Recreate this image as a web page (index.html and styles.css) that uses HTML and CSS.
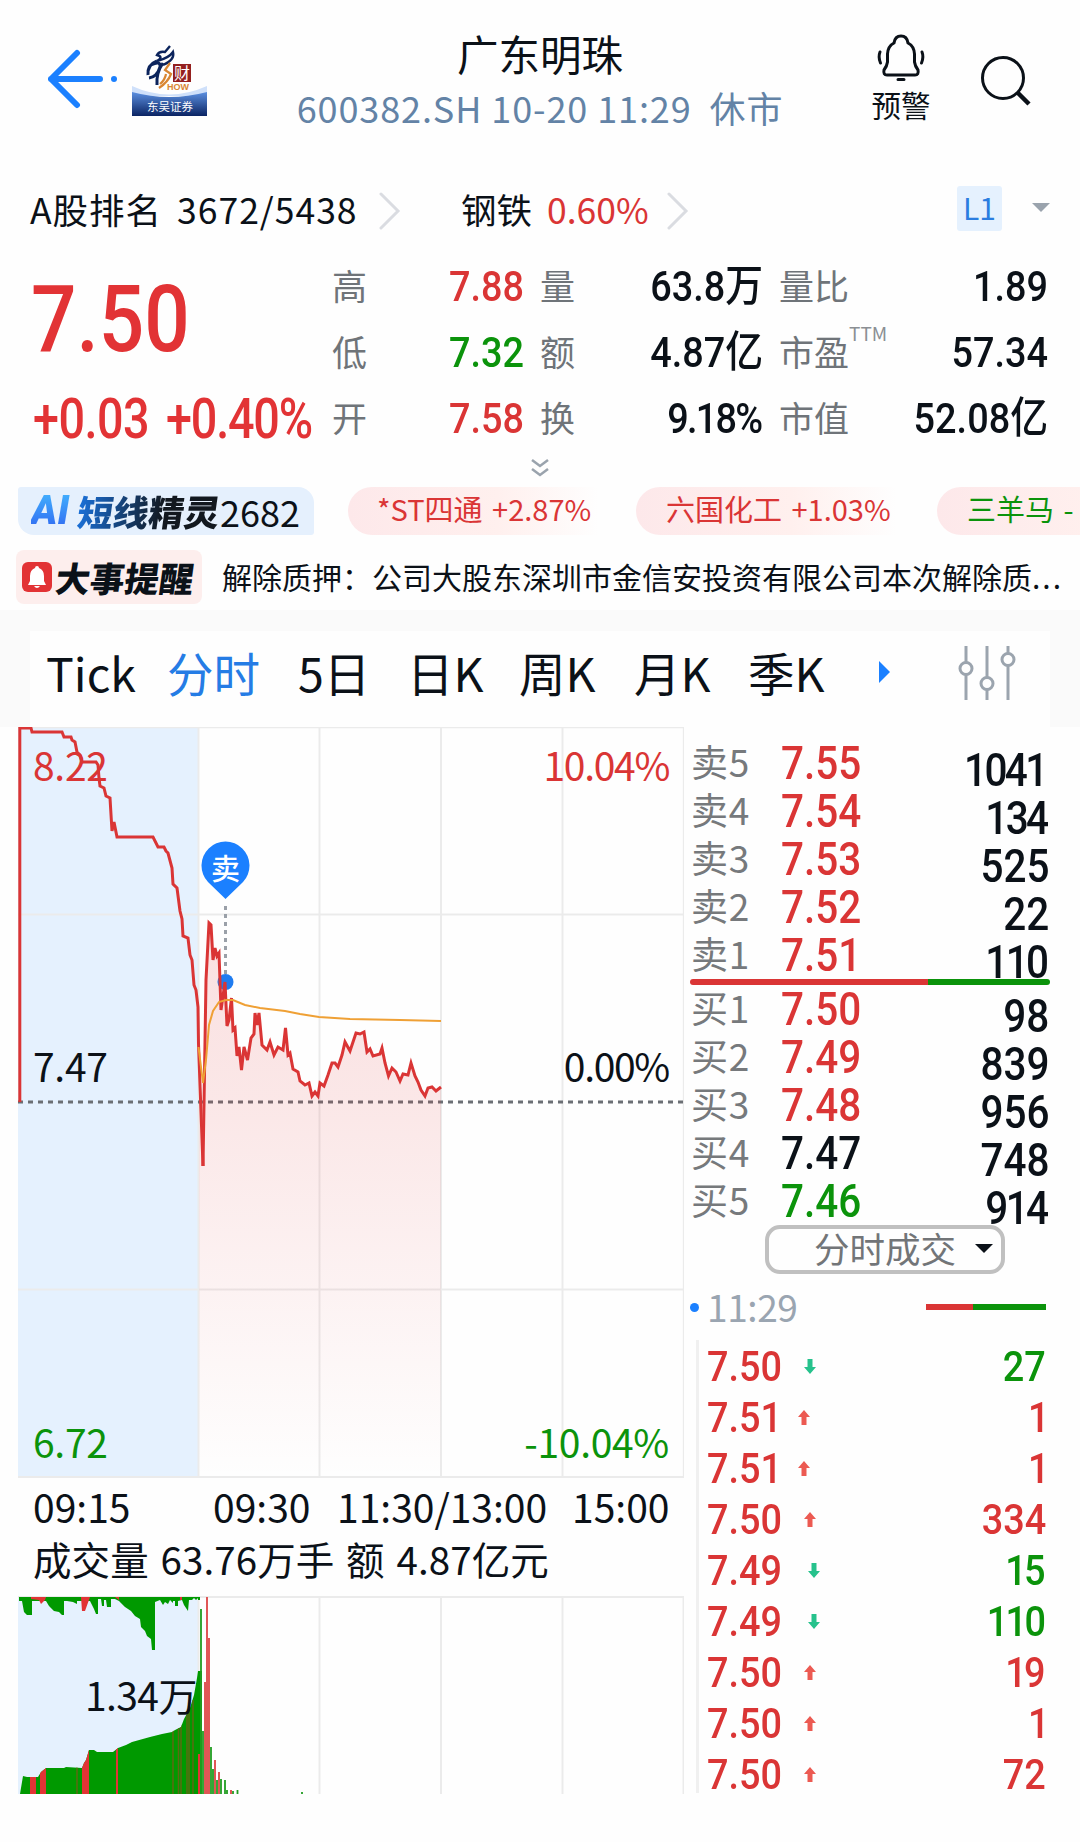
FILE: index.html
```html
<!DOCTYPE html>
<html lang="zh-CN">
<head>
    <meta charset="UTF-8">
    <meta name="viewport" content="width=device-width, initial-scale=1.0">
    <title>广东明珠 600382.SH</title>
    <link rel="stylesheet" href="styles.css">
</head>
<body>
    <!-- 顶部导航 -->
    <header class="header">
        <div class="header-left">
            <svg class="back" width="70" height="62" viewBox="0 0 70 62" fill="none" stroke="#1b80ff" stroke-width="6" stroke-linecap="round" stroke-linejoin="round">
                <path d="M29 5 L3 31 L29 57 M3 31 H52"/>
                <circle cx="66" cy="31" r="3" fill="#1b80ff" stroke="none"/>
            </svg>
            <div class="broker">
                <svg width="75" height="73" viewBox="0 0 75 73">
                    <defs>
                        <linearGradient id="brokerBg" x1="0" y1="0" x2="0" y2="1">
                            <stop offset="0" stop-color="#5b8fe0"/>
                            <stop offset="1" stop-color="#0b2463"/>
                        </linearGradient>
                    </defs>
                    <path d="M0 43 Q37 60 75 43 V53 H0Z" fill="#cfe0fa"/>
                    <path d="M0 49 Q37 59 75 49 V73 H0Z" fill="url(#brokerBg)"/>
                    <path d="M38 3 L33 9 Q27 8 25 12 Q32 14 25 18 Q37 15 41 9 Q43 17 31 22" fill="none" stroke="#0c245c" stroke-width="2.4"/>
                    <path d="M25 18 Q15 22 16 32 M19 22 Q29 17 28 24 Q25 34 17 35 M31 20 Q24 30 25 42" fill="none" stroke="#0c245c" stroke-width="3"/>
                    <path d="M38 20 L33 27 L39 31 Q36 39 27 45 M34 31 Q33 37 28 41" fill="none" stroke="#d98632" stroke-width="2.2"/>
                    <rect x="41" y="21" width="18" height="18" fill="#94201f"/>
                    <text class="logo-cai" x="42" y="36">财</text>
                    <text class="logo-how" x="35" y="47">HOW</text>
                    <text class="logo-name" x="15" y="68">东吴证券</text>
                </svg>
            </div>
        </div>
        <div class="header-title">
            <h1>广东明珠</h1>
            <p>600382.SH 10-20 11:29  休市</p>
        </div>
        <div class="header-right">
            <div class="alarm">
                <svg width="50" height="48" viewBox="0 0 50 48" fill="none" stroke="#0b1118" stroke-width="3" stroke-linecap="round" stroke-linejoin="round">
                    <path d="M18 9 Q19 2 25 2 Q31 2 32 9 Q38 12 38.500 20 V28 Q39 32 42 36 Q43 41 39 41 H11 Q7 41 8 36 Q11 32 11.500 28 V20 Q12 12 18 9Z"/>
                    <path d="M22 45.500 H28 M4 18 Q2 23 4.500 29 M46 18 Q48 23 45.500 29"/>
                </svg>
                <span>预警</span>
            </div>
            <svg class="search" width="54" height="54" viewBox="0 0 54 54" fill="none" stroke="#0b1118" stroke-width="3">
                <circle cx="24" cy="24" r="20.500"/>
                <path d="M39 39 L50 50" stroke-width="4.500"/>
            </svg>
        </div>
    </header>

    <!-- 排名 / 行业 -->
    <div class="rank">
        <span class="rank-all">A股排名 3672/5438</span>
        <svg class="arrow" width="22" height="38" viewBox="0 0 22 38"><path d="M2 2 L19 19 L2 36"/></svg>
        <span class="rank-sector">钢铁 <b class="red">0.60%</b></span>
        <svg class="arrow" width="22" height="38" viewBox="0 0 22 38"><path d="M2 2 L19 19 L2 36"/></svg>
        <span class="level">L1</span>
        <span class="caret"></span>
    </div>

    <!-- 行情数据 -->
    <section class="quote">
        <div class="price">
            <div class="price-now"><span class="num">7.50</span></div>
            <div class="price-change"><span class="num">+0.03</span><span class="num">+0.40%</span></div>
        </div>
        <div class="stats">
            <span class="label">高</span><span class="value red">7.88</span>
            <span class="label">量</span><span class="value">63.8万</span>
            <span class="label">量比</span><span class="value">1.89</span>
            <span class="label">低</span><span class="value green">7.32</span>
            <span class="label">额</span><span class="value">4.87亿</span>
            <span class="label">市盈<sup>TTM</sup></span><span class="value">57.34</span>
            <span class="label">开</span><span class="value red">7.58</span>
            <span class="label">换</span><span class="value percent">9.18%</span>
            <span class="label">市值</span><span class="value">52.08亿</span>
        </div>
    </section>
    <div class="more">
        <svg width="18" height="20" viewBox="0 0 18 20" fill="none" stroke="#9aa3ad" stroke-width="2.500"><path d="M1 2 L9 8 L17 2 M1 11 L9 17 L17 11"/></svg>
    </div>

    <!-- 短线精灵 -->
    <div class="sprite">
        <div class="sprite-badge"><i class="ai">AI</i><i class="sprite-name">短线精灵</i><span>2682</span></div>
        <div class="pill pill-1 red">*ST四通 +2.87%</div>
        <div class="pill pill-2 red">六国化工 +1.03%</div>
        <div class="pill pill-3 green">三羊马 -</div>
    </div>

    <div class="notice">
        <div class="notice-badge">
            <svg width="30" height="30" viewBox="0 0 30 30">
                <rect width="30" height="30" rx="6" fill="#e23335"/>
                <path d="M15 4 Q17 4 17 6 Q22 8 22 14 V19 L24 23 H6 L8 19 V14 Q8 8 13 6 Q13 4 15 4Z M12 24 H18 Q15 28 12 24Z" fill="#fff"/>
            </svg>
            <i>大事提醒</i>
        </div>
        <p>解除质押：公司大股东深圳市金信安投资有限公司本次解除质<span>...</span></p>
    </div>

    <!-- 周期切换 -->
    <div class="tabs-wrap">
        <nav class="tabs">
            <a class="tab tick">Tick</a>
            <a class="tab active">分时</a>
            <a class="tab day5">5日</a>
            <a class="tab day">日K</a>
            <a class="tab week">周K</a>
            <a class="tab month">月K</a>
            <a class="tab season">季K</a>
            <span class="tabs-next"></span>
            <svg class="sliders" width="60" height="56" viewBox="0 0 60 56" fill="none" stroke="#9ba4ae" stroke-width="3">
                <path d="M9 1 V17 M9 30 V55 M30 1 V32 M30 45 V55 M51 1 V8 M51 21 V55"/>
                <circle cx="9" cy="23.500" r="6"/>
                <circle cx="30" cy="38.500" r="6"/>
                <circle cx="51" cy="14.500" r="6"/>
            </svg>
        </nav>
    </div>

    <main class="board">
        <div class="charts">
            <!-- 分时图 -->
            <div class="chart">
                <svg width="666" height="751" viewBox="18 727 666 751">
                    <defs>
                        <linearGradient id="area" gradientUnits="userSpaceOnUse" x1="0" y1="920" x2="0" y2="1477">
                            <stop offset="0" stop-color="#e23335" stop-opacity=".15"/>
                            <stop offset=".35" stop-color="#e23335" stop-opacity=".11"/>
                            <stop offset="1" stop-color="#e23335" stop-opacity="0"/>
                        </linearGradient>
                    </defs>
                    <rect x="18" y="727" width="180" height="750" fill="#e5f1fe"/>
                    <g fill="none" stroke="#ebebeb" stroke-width="2">
                        <path stroke-width="1.300" d="M18 727.500 H683.500 V1477"/>
                        <path d="M18 914.500 H683 M18 1289.500 H683 M18 1477 H684 M198.500 727 V1477 M319.500 727 V1477 M441 727 V1477 M562.500 727 V1477"/>
                    </g>
                    <path d="M18 1102 H683" stroke="#6b6f74" stroke-width="3" stroke-dasharray="5 5"/>
                    <path fill="url(#area)" d="M199 1050 L203 1166 L206 980 L209 923 L211 925 L213 960 L215 948 L217 956 L219 953 L221 1010 L225 982 L227 1026 L229 1020 L231.500 998 L233 1030 L235 1028 L237 1056 L239 1047 L241.500 1070 L244 1047 L247.500 1060 L251 1038 L254 1034 L255 1013 L257 1025 L259 1013 L262 1045 L267 1050 L270 1042 L274 1055 L278 1047 L283 1050 L285.500 1028 L288 1055 L290 1053 L293 1069 L298 1072 L300 1081 L305 1085 L309 1083 L312 1096 L315 1092 L318 1096 L320 1083 L324 1086 L328 1075 L332 1063 L335 1063 L338 1067 L342 1055 L345 1042 L350 1051 L356 1033 L360 1034 L364 1032 L367 1052 L370 1049 L373 1056 L380 1054 L382 1048 L385 1063 L388.500 1076 L392 1068 L396 1072 L400 1081 L403 1074 L408 1075 L411 1063 L415 1076 L418 1082 L421 1090 L425 1096 L428 1088 L432 1087 L436 1091 L441 1087 V1477 H199Z"/>
                    <path d="M225.500 906 V975" stroke="#9aa0a8" stroke-width="3" stroke-dasharray="4 4"/>
                    <circle cx="225.500" cy="982" r="8" fill="#1f7cf0"/>
                    <g fill="none" stroke="#da3535" stroke-width="3">
                        <path d="M19.800 1102 V728 H31 L32 732 H62 L64 737 H71 L72 740 L75 742 L77 752 L80 755 L82 762 H96 L98 765 L99 778 L100 786 L104 788 L106 796 L110 798 L112 831 L114 822 L117 837 H153 L158 847 H164 L166 851 L168 853 L172 868 L173 884 L177 888 L180 911 L182 919 L183 936 L188 938 L190 955 L192 960 L194 985 L196 990 L198 1007 L198.500 1044 L203 1166"/>
                        <path d="M203 1166 L206 980 L209 923 L211 925 L213 960 L215 948 L217 956 L219 953 L221 1010 L225 982 L227 1026 L229 1020 L231.500 998 L233 1030 L235 1028 L237 1056 L239 1047 L241.500 1070 L244 1047 L247.500 1060 L251 1038 L254 1034 L255 1013 L257 1025 L259 1013 L262 1045 L267 1050 L270 1042 L274 1055 L278 1047 L283 1050 L285.500 1028 L288 1055 L290 1053 L293 1069 L298 1072 L300 1081 L305 1085 L309 1083 L312 1096 L315 1092 L318 1096 L320 1083 L324 1086 L328 1075 L332 1063 L335 1063 L338 1067 L342 1055 L345 1042 L350 1051 L356 1033 L360 1034 L364 1032 L367 1052 L370 1049 L373 1056 L380 1054 L382 1048 L385 1063 L388.500 1076 L392 1068 L396 1072 L400 1081 L403 1074 L408 1075 L411 1063 L415 1076 L418 1082 L421 1090 L425 1096 L428 1088 L432 1087 L436 1091 L441 1087"/>
                    </g>
                    <path fill="none" stroke="#efa035" stroke-width="2" d="M198.500 1047 L203 1083 L206 1060 L209 1025 L213 1011 L219 1002 L226 1000 L233 1000 L245 1005 L260 1008 L285 1011 L300 1014 L319 1017 L350 1019 L400 1020 L441 1021"/>
                    <path fill="#1b80ff" d="M225.500 899 L208 882 A24 24 0 1 1 243 882 Z"/>
                    <text class="pin-text" x="225.500" y="880">卖</text>
                </svg>
                <span class="axis top-left red">8.22</span>
                <span class="axis top-right red">10.04%</span>
                <span class="axis mid-left">7.47</span>
                <span class="axis mid-right">0.00%</span>
                <span class="axis bottom-left green">6.72</span>
                <span class="axis bottom-right green">-10.04%</span>
            </div>
            <div class="times"><span>09:15</span><span>09:30</span><span>11:30/13:00</span><span>15:00</span></div>
            <div class="volume-title">成交量 63.76万手 额 4.87亿元</div>
            <!-- 成交量 -->
            <div class="volume">
                <svg width="666" height="198" viewBox="18 1596 666 198">
                    <defs>
                        <clipPath id="volShape">
                            <path d="M20 1794 L23 1776 L27 1777 H38 L41 1772 L46 1768 H64 L66 1767 L82 1768 L84 1763 L86 1760 L89 1750 H94 L97 1752 H113 L118 1748 L126 1745 L132 1742 L150 1737 L162 1734 L172 1732 L175 1730 L181 1727 L184 1719 L190 1708 L194 1695 L197 1678 L198 1671 H202 V1794Z"/>
                        </clipPath>
                    </defs>
                    <rect x="18" y="1596" width="180" height="198" fill="#e5f1fe"/>
                    <path fill="none" stroke="#ebebeb" stroke-width="2" d="M18 1597 H683.500 V1794 M198.500 1597 V1794 M319.500 1597 V1794 M441 1597 V1794 M562.500 1597 V1794"/>
                    <path fill="#009900" d="M19 1597 H200 V1600 H198 V1598 L196 1600 L194 1598 L192 1600 H189 L188 1611 L184 1605 L182 1600 L178 1601 V1606 H175 V1601 H173 V1603 L170 1600 L168 1604 L165 1602 L163 1605 L160 1600 L155 1602 V1650 H152 L151 1639 L147 1636 L145 1631 L141 1627 L140 1619 L135 1616 L131 1611 L125 1607 L119 1601 L115 1599 H111 V1607 H107 L106 1600 H104 V1606 H102 L101 1599 H98 V1614 H96 L94 1609 L90 1601 H77 V1604 L73 1602 L67 1601 L64 1601 V1615 H62 L59 1612 L54 1611 L49 1606 L46 1601 H32 V1615 H27 L24 1612 L22 1601 H19Z"/>
                    <path fill="#e23335" d="M31 1597 H46 L45 1600 L41 1604 L39 1600 L31 1599Z M81 1597 H90 L85 1611 H82Z M115 1597 H119 V1600Z M180 1597 H182 V1600 H180Z"/>
                    <g clip-path="url(#volShape)">
                        <rect x="18" y="1660" width="190" height="134" fill="#009900"/>
                        <path fill="#e23335" d="M30 1700 H36 V1794 H30Z M40 1700 H46 V1794 H40Z M82 1700 H89 V1794 H82Z M116 1700 H118 V1794 H116Z M198 1754 H200 V1794 H198Z"/>
                        <path stroke="#5c6a12" stroke-width="1.500" d="M77 1700 V1794 M173 1700 V1794 M178.500 1700 V1794 M181 1700 V1794 M187 1700 V1794 M189 1700 V1794 M193 1700 V1794"/>
                    </g>
                    <path stroke="#219d21" stroke-width="1.800" d="M201 1609 V1794 M203 1731 V1794 M211 1747 V1794 M213 1769 V1794 M217 1780 V1794 M221 1779 V1794 M225 1780 V1794 M227 1790 V1794 M233 1791 V1794 M237.500 1790 V1794 M302 1792 V1794"/>
                    <path stroke="#e05656" stroke-width="2" d="M205 1682 V1794 M207 1597 V1794 M209 1638 V1794 M215 1760 V1794 M219 1772 V1794 M231 1790 V1794"/>
                </svg>
                <span class="axis volume-max">1.34万</span>
            </div>
        </div>

        <!-- 五档盘口 -->
        <aside class="side">
            <div class="book">
                <div class="row"><span>卖5</span><b class="red">7.55</b><em class="tight">1041</em></div>
                <div class="row"><span>卖4</span><b class="red">7.54</b><em class="tight">134</em></div>
                <div class="row"><span>卖3</span><b class="red">7.53</b><em>525</em></div>
                <div class="row"><span>卖2</span><b class="red">7.52</b><em>22</em></div>
                <div class="row"><span>卖1</span><b class="red">7.51</b><em class="tight">110</em></div>
            </div>
            <div class="ratio"></div>
            <div class="book">
                <div class="row"><span>买1</span><b class="red">7.50</b><em>98</em></div>
                <div class="row"><span>买2</span><b class="red">7.49</b><em>839</em></div>
                <div class="row"><span>买3</span><b class="red">7.48</b><em>956</em></div>
                <div class="row"><span>买4</span><b>7.47</b><em>748</em></div>
                <div class="row"><span>买5</span><b class="green">7.46</b><em class="tight">914</em></div>
            </div>
            <button class="deal-type">分时成交<span class="caret-dark"></span></button>
            <div class="deal-time"><i></i><span>11:29</span><div class="deal-ratio"></div></div>
            <!-- 逐笔成交 -->
            <div class="deals">
                <div class="deal"><b>7.50</b><svg class="down" viewBox="0 0 12 16"><path d="M3.500 0 H8.500 V8 H12 L6 15 L0 8 H3.500Z"/></svg><em class="green">27</em></div>
                <div class="deal"><b class="narrow">7.51</b><svg class="up" viewBox="0 0 12 16"><path d="M3.500 15 H8.500 V7 H12 L6 0 L0 7 H3.500Z"/></svg><em class="red one">1</em></div>
                <div class="deal"><b class="narrow">7.51</b><svg class="up" viewBox="0 0 12 16"><path d="M3.500 15 H8.500 V7 H12 L6 0 L0 7 H3.500Z"/></svg><em class="red one">1</em></div>
                <div class="deal"><b>7.50</b><svg class="up" viewBox="0 0 12 16"><path d="M3.500 15 H8.500 V7 H12 L6 0 L0 7 H3.500Z"/></svg><em class="red">334</em></div>
                <div class="deal"><b class="wide">7.49</b><svg class="down" viewBox="0 0 12 16"><path d="M3.500 0 H8.500 V8 H12 L6 15 L0 8 H3.500Z"/></svg><em class="green tight">15</em></div>
                <div class="deal"><b class="wide">7.49</b><svg class="down" viewBox="0 0 12 16"><path d="M3.500 0 H8.500 V8 H12 L6 15 L0 8 H3.500Z"/></svg><em class="green tight">110</em></div>
                <div class="deal"><b>7.50</b><svg class="up" viewBox="0 0 12 16"><path d="M3.500 15 H8.500 V7 H12 L6 0 L0 7 H3.500Z"/></svg><em class="red tight">19</em></div>
                <div class="deal"><b>7.50</b><svg class="up" viewBox="0 0 12 16"><path d="M3.500 15 H8.500 V7 H12 L6 0 L0 7 H3.500Z"/></svg><em class="red one">1</em></div>
                <div class="deal"><b>7.50</b><svg class="up" viewBox="0 0 12 16"><path d="M3.500 15 H8.500 V7 H12 L6 0 L0 7 H3.500Z"/></svg><em class="red">72</em></div>
            </div>
        </aside>
    </main>
</body>
</html>
```
FILE: styles.css
```css
* {
    box-sizing: border-box;
}

body {
    margin: 0;
    width: 1080px;
    height: 1842px;
    overflow: hidden;
    background: #fefefe;
    color: #0b1118;
    font-family: "Noto Sans CJK SC", "Noto Sans", sans-serif;
    font-weight: 400;
}

svg {
    display: block;
    flex: none;
}

i, em {
    font-style: normal;
}

.red {
    color: #da3535;
}

.green {
    color: #0b930b;
}

/* 顶部导航 */
.header {
    height: 180px;
    display: flex;
    justify-content: space-between;
}

.header-left {
    width: 280px;
    display: flex;
    padding: 43px 0 0 48px;
}

.back {
    margin-top: 5px;
}

.broker {
    margin-left: 14px;
}

.logo-cai {
    font-size: 16px;
    fill: #fff;
}

.logo-how {
    font: bold 9px "Liberation Sans", sans-serif;
    fill: #d98632;
}

.logo-name {
    font-size: 11.5px;
    fill: #fff;
}

.header-title {
    width: 520px;
    text-align: center;
    padding-top: 28px;
}

.header-title h1 {
    margin: 0;
    font-size: 41.5px;
    line-height: 50px;
    font-weight: 400;
}

.header-title p {
    margin: 4px 0 0;
    font-size: 36px;
    line-height: 50px;
    color: #6383a6;
    white-space: pre;
    letter-spacing: 0.9px;
}

.header-right {
    width: 280px;
    display: flex;
    padding-top: 34px;
    padding-left: 71px;
}

.alarm {
    width: 60px;
    display: flex;
    flex-direction: column;
    align-items: center;
    font-size: 29.5px;
    line-height: 40px;
    white-space: nowrap;
}

.alarm span {
    margin-top: 2px;
}

.search {
    margin: 20px 0 0 48px;
}

/* 排名 */
.rank {
    height: 58px;
    padding-left: 30px;
    display: flex;
    align-items: center;
    font-size: 35.5px;
    line-height: 50px;
    white-space: pre;
}

.rank b {
    font-weight: 400;
}

.rank-all {
    width: 349px;
    letter-spacing: 1px;
    word-spacing: 6px;
}

.rank-sector {
    width: 206px;
    margin-left: 60px;
    word-spacing: 7px;
}

.arrow {
    margin-top: 3px;
    fill: none;
    stroke: #dadce1;
    stroke-width: 3;
    stroke-linecap: round;
}

.level {
    width: 45px;
    height: 45px;
    margin: -2px 0 0 268px;
    border-radius: 3px;
    background: #e5f1fe;
    color: #2b7de0;
    font-size: 30px;
    line-height: 42px;
    text-align: center;
}

.caret {
    margin: -3px 0 0 30px;
    border: 9px solid transparent;
    border-top-color: #9aa3ad;
    border-bottom: 0;
}

/* 行情 */
.quote {
    display: flex;
    height: 197px;
    margin-top: 15px;
    font-family: Roboto, "Noto Sans CJK SC", sans-serif;
}

.price {
    width: 330px;
    padding: 17px 0 0 31px;
    font-weight: 500;
    color: #e23335;
}

.num {
    display: inline-block;
    transform: scaleX(0.86);
    transform-origin: left;
}

.price-now {
    font-size: 93px;
    line-height: 100px;
}

.price-change {
    display: flex;
    padding-left: 2px;
    font-size: 55px;
    line-height: 99px;
    letter-spacing: -1.4px;
}

.price-change .num {
    width: 133px;
    transform: scaleX(0.85);
}

.price-change .num:first-child {
    letter-spacing: -0.6px;
}

.stats {
    width: 720px;
    display: grid;
    grid-template-columns: 50px 144px 67px 172px 128px 157px;
    grid-template-rows: repeat(3, 66px);
    line-height: 66px;
}

.label {
    padding-left: 16px;
    font-family: "Noto Sans CJK SC", sans-serif;
    font-size: 35px;
    line-height: 64px;
    color: #6f7479;
    white-space: nowrap;
}

.stats .label:nth-child(6n+1) {
    padding-left: 2px;
}

.label sup {
    display: inline-block;
    font-size: 19px;
    line-height: 20px;
    vertical-align: 25px;
    color: #8b8f94;
}

.value {
    text-align: right;
    font-size: 43px;
    font-weight: 500;
    white-space: nowrap;
    transform: scaleX(0.88);
    transform-origin: right;
}

.percent {
    padding-right: 2px;
    letter-spacing: -2px;
}

.tight {
    letter-spacing: -3px;
}

.more {
    height: 37px;
    display: flex;
    justify-content: center;
    padding-top: 8px;
}

/* 短线精灵 */
.sprite {
    display: flex;
    height: 48px;
    padding-left: 18px;
    white-space: nowrap;
}

.sprite-badge {
    flex: none;
    width: 296px;
    display: flex;
    align-items: center;
    padding-left: 13px;
    border-radius: 3px 16px 3px 16px;
    background: #e5f0fd;
    font-size: 36px;
    line-height: 44px;
}

.ai {
    width: 47px;
    font: italic 900 40px/44px Roboto, sans-serif;
    background: linear-gradient(#43b7ff, #2f63f0);
    -webkit-background-clip: text;
    background-clip: text;
    color: transparent;
}

.sprite-name {
    width: 142px;
    font-size: 35.5px;
    font-weight: 900;
    transform: skewX(-8deg);
    background: linear-gradient(90deg, #1a70d8, #12181f 60%);
    -webkit-background-clip: text;
    background-clip: text;
    color: transparent;
}

.pill {
    flex: none;
    height: 48px;
    border-radius: 24px 0 0 24px;
    background: linear-gradient(90deg, #fde8ea, #fff0ee 60%, #fefefe);
    font-size: 29px;
    line-height: 43px;
    word-spacing: 3px;
}

.pill-1 {
    width: 250px;
    margin-left: 34px;
    padding-left: 29px;
}

.pill-2 {
    width: 260px;
    margin-left: 38px;
    padding-left: 30px;
}

.pill-3 {
    width: 260px;
    margin-left: 41px;
    padding-left: 30px;
}

/* 大事提醒 */
.notice {
    display: flex;
    align-items: center;
    height: 54px;
    margin: 15px 0 6px;
    padding-left: 16px;
}

.notice-badge {
    flex: none;
    width: 186px;
    height: 54px;
    display: flex;
    align-items: center;
    padding-left: 6px;
    border-radius: 8px;
    background: #fdeeed;
    font-size: 34.5px;
    line-height: 50px;
    font-weight: 900;
}

.notice-badge i {
    margin-left: 4px;
    transform: skewX(-8deg);
}

.notice p {
    margin: -2px 0 0 20px;
    font-size: 30px;
    line-height: 50px;
    white-space: nowrap;
}

.notice p span {
    letter-spacing: 2px;
}

/* 周期切换 */
.tabs-wrap {
    height: 117px;
    padding: 21px 30px 0;
    background: #fafafa;
}

.tabs {
    height: 96px;
    display: flex;
    padding-left: 16px;
    background: #fefefe;
    font-size: 46.5px;
    line-height: 82px;
}

.tab {
    flex: none;
    white-space: nowrap;
}

.tick {
    width: 121px;
}

.active {
    width: 131px;
    color: #257ce5;
}

.day5 {
    width: 109px;
}

.day {
    width: 112px;
}

.week {
    width: 115px;
}

.month {
    width: 114px;
}

.season {
    width: 131px;
}

.tabs-next {
    height: 0;
    margin-top: 30px;
    border: 11px solid transparent;
    border-left-color: #1b80ff;
    border-right: 0;
}

.sliders {
    margin: 14px 0 0 67px;
}

/* 图表 */
.board {
    display: flex;
    padding-left: 18px;
}

.charts {
    width: 666px;
}

.chart, .volume {
    position: relative;
}

.axis {
    position: absolute;
    font-size: 39px;
    line-height: 50px;
    letter-spacing: -0.3px;
    white-space: nowrap;
}

.top-left, .mid-left, .bottom-left {
    left: 15px;
}

.top-right, .mid-right, .bottom-right {
    right: 15px;
    letter-spacing: -1.3px;
}

.bottom-right {
    letter-spacing: -0.3px;
}

.top-left, .top-right {
    top: 12px;
}

.mid-left, .mid-right {
    top: 313px;
}

.bottom-left, .bottom-right {
    top: 689px;
}

.pin-text {
    font-size: 29px;
    font-weight: 500;
    fill: #fff;
    text-anchor: middle;
}

.times {
    display: flex;
    height: 57px;
    padding-left: 15px;
    font-size: 39px;
    line-height: 56px;
    white-space: nowrap;
}

.times span:nth-child(1) {
    width: 180px;
}

.times span:nth-child(2) {
    width: 124px;
}

.times span:nth-child(3) {
    width: 235px;
}

.volume-title {
    height: 61px;
    padding-left: 15px;
    font-size: 38.5px;
    line-height: 46px;
    letter-spacing: 0.1px;
    word-spacing: 3px;
    white-space: nowrap;
}

.volume-max {
    left: 67px;
    top: 73px;
    letter-spacing: -0.6px;
}

/* 盘口 */
.side {
    width: 366px;
    padding: 12px 0 0 6px;
    font-family: Roboto, "Noto Sans CJK SC", sans-serif;
}

.row {
    height: 48px;
    display: flex;
    align-items: center;
    line-height: 48px;
    font-size: 46px;
}

.row span {
    width: 91px;
    padding-left: 1px;
    margin-top: -4px;
    font-family: "Noto Sans CJK SC", sans-serif;
    font-size: 37px;
    line-height: 44px;
    letter-spacing: 0.8px;
    color: #76797c;
}

.row b, .row em {
    font-weight: 500;
    transform: scaleX(0.88);
    transform-origin: left;
}

.row em {
    margin-left: auto;
    padding-top: 13px;
    margin-right: 1px;
    transform-origin: right;
}

.row .tight {
    margin-right: 4px;
}

.ratio {
    width: 360px;
    height: 6px;
    border-radius: 3px;
    background: linear-gradient(90deg, #da3535 66%, #0b930b 66%);
}

.deal-type {
    display: flex;
    align-items: center;
    width: 240px;
    height: 49px;
    margin: 0 0 0 75px;
    padding: 0 8px 3px 45px;
    border: 4px solid #c0c0c0;
    border-radius: 15px;
    background: none;
    font-family: "Noto Sans CJK SC", sans-serif;
    font-size: 35.5px;
    line-height: 40px;
    color: #727578;
    white-space: nowrap;
}

.caret-dark {
    flex: none;
    margin-left: 19px;
    border: 9px solid transparent;
    border-top-color: #0b1118;
    border-bottom: 0;
}

.deal-time {
    height: 66px;
    display: flex;
    align-items: center;
    font-family: "Noto Sans CJK SC", sans-serif;
    font-size: 37px;
    line-height: 60px;
    color: #9aa5b1;
}

.deal-time i {
    width: 9px;
    height: 9px;
    border-radius: 50%;
    background: #1b80ff;
}

.deal-time span {
    width: 227px;
    padding-left: 8px;
    margin-top: -3px;
    letter-spacing: -0.4px;
}

.deal-ratio {
    width: 120px;
    height: 6px;
    background: linear-gradient(90deg, #da3535 39%, #0b930b 39%);
}

.deals {
    margin-left: 6px;
    height: 453px;
    padding-top: 1px;
    border-left: 3px solid #f0f0f0;
}

.deal {
    height: 51px;
    display: flex;
    align-items: center;
    padding-left: 8px;
    font-size: 43px;
    line-height: 51px;
}

.deal b, .deal em {
    font-weight: 500;
    transform: scaleX(0.88);
    transform-origin: left;
}

.deal b {
    width: 97px;
    color: #da3535;
}

.deal b.narrow {
    width: 91px;
}

.deal b.wide {
    width: 101px;
}

.deal svg {
    width: 12px;
    height: 16px;
    fill: #26c28c;
}

.deal .up {
    fill: #ec5a52;
}

.deal em {
    margin-left: auto;
    margin-right: 4px;
    transform-origin: right;
}

.deal .tight {
    margin-right: 7px;
}

.deal .one {
    margin-right: 1px;
}
```
